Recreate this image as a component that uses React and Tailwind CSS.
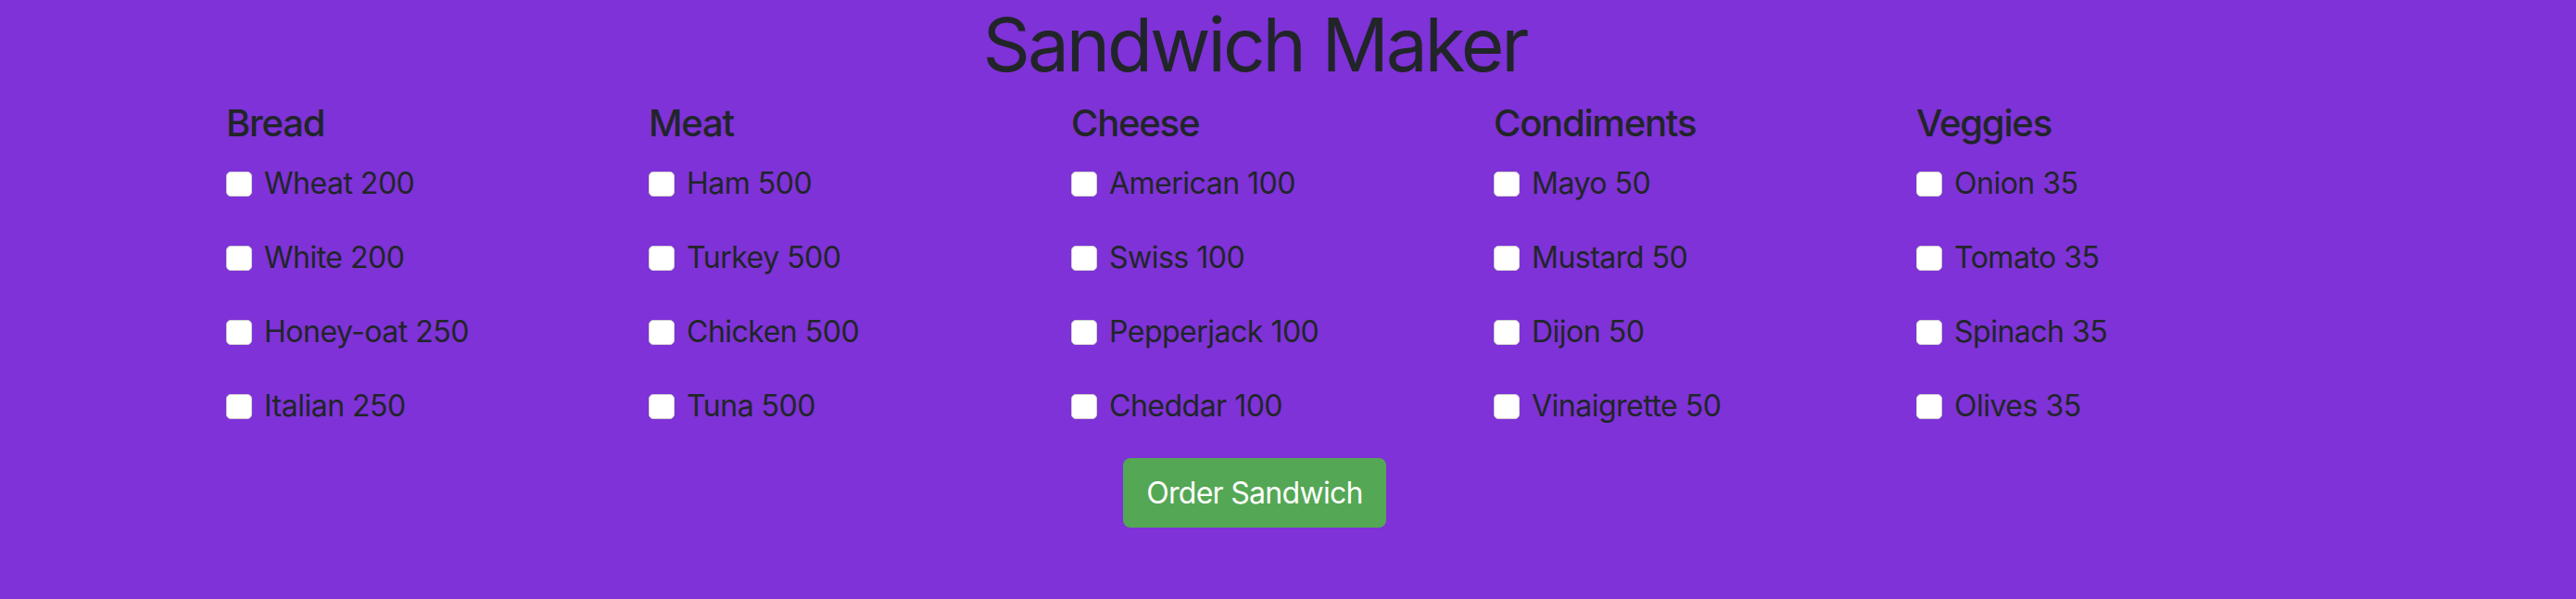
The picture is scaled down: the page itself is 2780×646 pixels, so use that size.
import React from 'react';

const groups = [
  { title: 'Bread', items: ['Wheat 200', 'White 200', 'Honey-oat 250', 'Italian 250'] },
  { title: 'Meat', items: ['Ham 500', 'Turkey 500', 'Chicken 500', 'Tuna 500'] },
  { title: 'Cheese', items: ['American 100', 'Swiss 100', 'Pepperjack 100', 'Cheddar 100'] },
  { title: 'Condiments', items: ['Mayo 50', 'Mustard 50', 'Dijon 50', 'Vinaigrette 50'] },
  { title: 'Veggies', items: ['Onion 35', 'Tomato 35', 'Spinach 35', 'Olives 35'] },
];

export default function App() {
  return (
    <div className="min-h-[646px] bg-[#7e32d7] text-[#212529] font-['Inter',sans-serif]">
      <h1 className="text-[80px] leading-[96px] font-normal text-center pr-[72px] tracking-[-3px]">Sandwich Maker</h1>

      <div className="ml-[244px] mt-[13px] grid grid-cols-[repeat(5,456px)]">
        {groups.map((group) => (
          <div key={group.title}>
            <h5 className="text-[40px] leading-[48px] font-medium tracking-[-1.2px]">{group.title}</h5>
            <div className="mt-[17px] flex flex-col gap-[32px]">
              {group.items.map((item) => (
                <label key={item} className="flex items-center gap-[13px] text-[32px] leading-[48px] tracking-[-0.5px]">
                  <input
                    type="checkbox"
                    className="appearance-none w-[28px] h-[27px] rounded-[5px] bg-white border border-[#d0d0d0]"
                  />
                  <span>{item}</span>
                </label>
              ))}
            </div>
          </div>
        ))}
      </div>

      <div className="flex justify-center pr-[72px] mt-[32px]">
        <button className="w-[284px] h-[75px] rounded-[8px] bg-[#54a754] text-white text-[32px] leading-[48px] tracking-[-0.7px]">
          Order Sandwich
        </button>
      </div>
    </div>
  );
}
